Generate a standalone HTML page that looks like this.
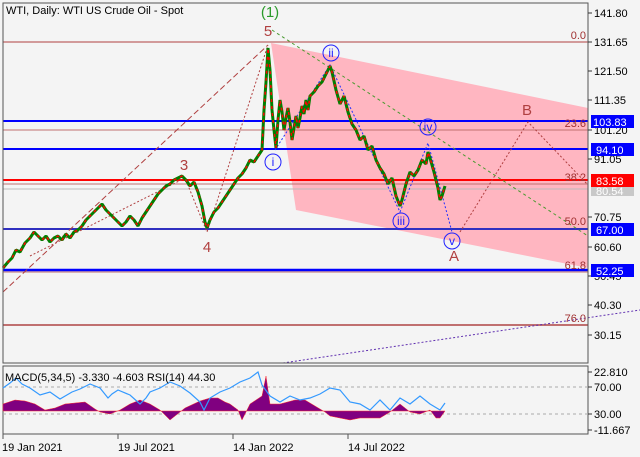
<!DOCTYPE html><html><head><meta charset="utf-8"><style>
body{margin:0;background:#f4f4f4;width:640px;height:457px;overflow:hidden}
svg{display:block;font-family:"Liberation Sans",sans-serif}
</style></head><body>
<svg width="640" height="457" xmlns="http://www.w3.org/2000/svg">
<rect width="640" height="457" fill="#f4f4f4"/>
<polygon points="271,43 588,108 588,268 296,210" fill="#ffb6c1"/>
<line x1="3" y1="42" x2="588" y2="42" stroke="#b04040"/>
<line x1="3" y1="130" x2="588" y2="130" stroke="#c07070"/>
<line x1="3" y1="184" x2="588" y2="184" stroke="#c07070"/>
<line x1="3" y1="189" x2="588" y2="189" stroke="#bbb"/>
<line x1="3" y1="325" x2="588" y2="325" stroke="#c07070" stroke-width="2"/>
<line x1="3" y1="121" x2="588" y2="121" stroke="#0000ff" stroke-width="2"/>
<line x1="3" y1="149" x2="588" y2="149" stroke="#0000ff" stroke-width="2"/>
<line x1="3" y1="180" x2="588" y2="180" stroke="#ff0000" stroke-width="2"/>
<line x1="3" y1="229" x2="588" y2="229" stroke="#3030c0" stroke-width="2"/>
<line x1="3" y1="270" x2="588" y2="270" stroke="#0000ff" stroke-width="2.5"/>
<line x1="3" y1="272" x2="588" y2="272" stroke="#c07070"/>
<g fill="none" stroke-width="1">
<path d="M3,292 L268,45" stroke="#b04040" stroke-dasharray="6,3"/>
<path d="M30,256 L185,178 L207,232 L268,45" stroke="#b04040" stroke-dasharray="2,2"/>
<path d="M272,30 L588,236" stroke="#4a9a30" stroke-dasharray="3,3"/>
<path d="M275,150 L330,65 L400,212 L428,143 L452,232" stroke="#2030ff" stroke-dasharray="2,2"/>
<path d="M460,232 L528,122 L588,185" stroke="#b04040" stroke-dasharray="2,2"/>
<path d="M283,363 L640,310" stroke="#6030b0" stroke-dasharray="2,2"/>
</g>
<g fill="none" stroke-linejoin="bevel">
<polyline stroke="#008000" stroke-width="3" points="3,268 8,262 12,258 16,250 20,252 25,243 30,238 34,232 38,236 42,240 46,236 50,242 54,238 58,236 62,240 66,234 70,238 74,232 78,230 82,226 86,220 90,216 94,212 98,208 102,204 106,210 110,214 114,218 118,222 122,226 126,222 130,216 134,220 138,226 142,218 146,212 150,206 154,200 158,194 162,190 166,186 170,184 174,180 178,178 182,176 186,180 190,186 194,182 198,192 202,206 205,222 207,228 210,220 214,212 218,208 222,202 226,196 230,190 234,184 238,178 242,174 246,168 250,160 254,162 258,156 262,150 264,110 266,82 268,48 270,70 272,110 274,130 276,148 278,120 280,100 282,112 284,130 286,118 288,108 290,122 292,140 294,128 296,116 298,128 300,118 302,106 304,114 306,100 308,110 310,96 314,92 318,86 322,82 326,74 330,66 332,72 336,90 340,104 344,96 348,112 352,124 356,130 360,140 364,136 368,150 372,146 376,160 380,168 384,174 388,184 392,178 396,196 400,206 402,200 406,184 410,172 414,176 418,170 422,160 426,164 428,152 430,158 434,172 438,188 440,200 442,196 445,186"/>
<polyline stroke="#ff0000" stroke-width="1.5" stroke-dasharray="3,4" points="3,268 8,262 12,258 16,250 20,252 25,243 30,238 34,232 38,236 42,240 46,236 50,242 54,238 58,236 62,240 66,234 70,238 74,232 78,230 82,226 86,220 90,216 94,212 98,208 102,204 106,210 110,214 114,218 118,222 122,226 126,222 130,216 134,220 138,226 142,218 146,212 150,206 154,200 158,194 162,190 166,186 170,184 174,180 178,178 182,176 186,180 190,186 194,182 198,192 202,206 205,222 207,228 210,220 214,212 218,208 222,202 226,196 230,190 234,184 238,178 242,174 246,168 250,160 254,162 258,156 262,150 264,110 266,82 268,48 270,70 272,110 274,130 276,148 278,120 280,100 282,112 284,130 286,118 288,108 290,122 292,140 294,128 296,116 298,128 300,118 302,106 304,114 306,100 308,110 310,96 314,92 318,86 322,82 326,74 330,66 332,72 336,90 340,104 344,96 348,112 352,124 356,130 360,140 364,136 368,150 372,146 376,160 380,168 384,174 388,184 392,178 396,196 400,206 402,200 406,184 410,172 414,176 418,170 422,160 426,164 428,152 430,158 434,172 438,188 440,200 442,196 445,186"/>
</g>
<g font-size="11" fill="#a03030" text-anchor="end">
<text x="586" y="39">0.0</text><text x="586" y="127">23.6</text><text x="586" y="181">38.2</text><text x="586" y="225">50.0</text><text x="586" y="269">61.8</text><text x="586" y="322">76.0</text>
</g>
<text x="6" y="14" font-size="11" fill="#000">WTI, Daily:  WTI US Crude Oil - Spot</text>
<g font-size="15" text-anchor="middle">
<text x="270" y="17" fill="#2a9a2a">(1)</text>
<text x="268" y="36" fill="#b04040">5</text>
<text x="184" y="170" fill="#b04040">3</text>
<text x="207" y="252" fill="#b04040">4</text>
<text x="454" y="261" fill="#b04040">A</text>
<text x="527" y="115" fill="#b04040">B</text>
</g>
<g fill="none" stroke="#2020ff"><circle cx="273" cy="162" r="8"/><circle cx="331" cy="53" r="8"/><circle cx="401" cy="221" r="8"/><circle cx="428" cy="127" r="8"/><circle cx="452" cy="241" r="8"/></g>
<g font-size="12" fill="#2020ff" text-anchor="middle"><text x="273" y="166">i</text><text x="331" y="57">ii</text><text x="401" y="225">iii</text><text x="428" y="131">iv</text><text x="452" y="245">v</text></g>
<rect x="3" y="3" width="585" height="360" fill="none" stroke="#555"/>
<rect x="3" y="366" width="585" height="68" fill="none" stroke="#555"/>
<g stroke="#aaa" stroke-dasharray="3,3"><line x1="3" y1="387" x2="588" y2="387"/><line x1="3" y1="414" x2="588" y2="414"/></g>
<path fill="#800080" stroke="#ff3030" stroke-width="0.5" d="M3,411 L3,404 15,400 25,401 35,404 45,410 55,408 65,404 75,403 85,402 95,409 100,412 110,414 120,410 130,404 140,400 150,404 160,410 170,420 175,416 185,408 200,401 210,398 218,398 225,402 230,404 238,410 242,420 250,404 262,396 266,376 270,404 280,404 295,400 305,400 315,406 325,412 330,416 340,418 350,420 360,418 370,418 380,418 390,412 400,404 410,412 420,414 430,410 436,418 440,418 445,411 Z"/>
<polyline fill="none" stroke="#3399ff" stroke-width="1.2" points="3,388 10,383 16,378 22,384 30,388 40,395 50,392 60,399 72,392 80,389 90,384 100,388 108,398 112,394 118,390 130,395 140,404 146,398 150,392 160,388 170,382 180,386 190,393 200,402 204,410 210,398 220,392 230,388 240,382 250,378 258,372 262,385 270,396 280,402 290,396 300,400 310,398 320,394 330,388 340,390 350,402 360,404 370,410 380,400 390,410 400,398 410,404 420,396 430,404 440,410 445,403"/>
<text x="5" y="381" font-size="11" fill="#000">MACD(5,34,5) -3.330 -4.603 RSI(14) 44.30</text>
<g stroke="#333"><line x1="588" y1="13" x2="592" y2="13"/><line x1="588" y1="42" x2="592" y2="42"/><line x1="588" y1="71" x2="592" y2="71"/><line x1="588" y1="100" x2="592" y2="100"/><line x1="588" y1="130" x2="592" y2="130"/><line x1="588" y1="159" x2="592" y2="159"/><line x1="588" y1="217" x2="592" y2="217"/><line x1="588" y1="247" x2="592" y2="247"/><line x1="588" y1="276" x2="592" y2="276"/><line x1="588" y1="305" x2="592" y2="305"/><line x1="588" y1="335" x2="592" y2="335"/><line x1="588" y1="372" x2="592" y2="372"/><line x1="588" y1="387" x2="592" y2="387"/><line x1="588" y1="414" x2="592" y2="414"/><line x1="588" y1="430" x2="592" y2="430"/></g>
<g font-size="11" fill="#000">
<text x="594" y="17">141.80</text><text x="594" y="46">131.65</text><text x="594" y="75">121.50</text><text x="594" y="104">111.35</text><text x="594" y="134">101.20</text><text x="594" y="163">91.05</text><text x="594" y="221">70.75</text><text x="594" y="251">60.60</text><text x="594" y="280">50.45</text><text x="594" y="309">40.30</text><text x="594" y="339">30.15</text><text x="594" y="376">22.810</text><text x="594" y="391">70.00</text><text x="594" y="418">30.00</text><text x="594" y="434">-11.667</text>
</g>
<g font-size="11">
<rect x="591" y="115" width="43" height="13" fill="#0000ff"/><text x="593" y="126" fill="#fff">103.83</text>
<rect x="591" y="143" width="43" height="13" fill="#0000ff"/><text x="596" y="154" fill="#fff">94.10</text>
<rect x="591" y="174" width="43" height="13" fill="#ff0000"/><text x="596" y="185" fill="#fff">83.58</text>
<rect x="591" y="187" width="43" height="9" fill="#c8c8c8"/><text x="596" y="195" fill="#fff">80.54</text>
<rect x="591" y="223" width="43" height="13" fill="#0000ff"/><text x="596" y="234" fill="#fff">67.00</text>
<rect x="591" y="264" width="43" height="13" fill="#0000ff"/><text x="596" y="275" fill="#fff">52.25</text>
</g>
<g font-size="11" fill="#000"><text x="2" y="451">19 Jan 2021</text><text x="118" y="451">19 Jul 2021</text><text x="233" y="451">14 Jan 2022</text><text x="348" y="451">14 Jul 2022</text></g>
<g stroke="#555"><line x1="3" y1="434" x2="3" y2="439"/><line x1="118" y1="434" x2="118" y2="439"/><line x1="233" y1="434" x2="233" y2="439"/><line x1="348" y1="434" x2="348" y2="439"/></g>
</svg>
</body></html>
